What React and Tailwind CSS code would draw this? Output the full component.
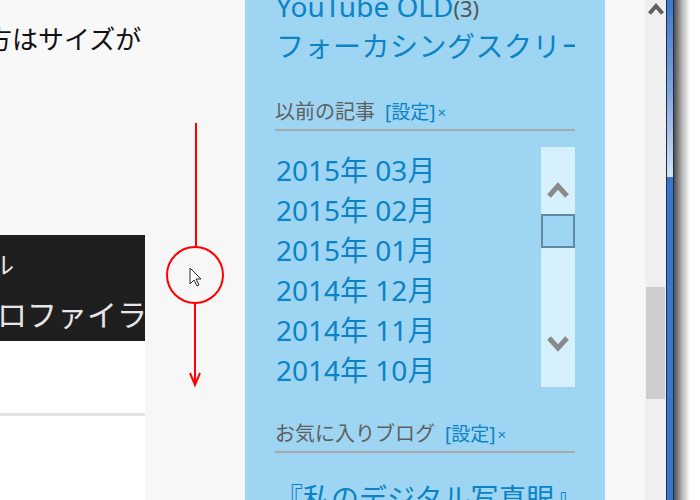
import React from 'react';

const months = ['2015年 03月', '2015年 02月', '2015年 01月', '2014年 12月', '2014年 11月', '2014年 10月'];

function Chevron({ down, className, color, width }) {
  return (
    <svg viewBox="0 0 22 18" className={className}>
      <polyline
        points={down ? '2,3 11,13 20,3' : '2,15 11,5 20,15'}
        fill="none"
        stroke={color}
        strokeWidth={width}
        strokeLinejoin="miter"
      />
    </svg>
  );
}

function WidgetHeading({ title }) {
  return (
    <div className="h-[36px] flex items-center border-b-2 border-[#a9a9a9] whitespace-nowrap">
      <span className="text-[20px] text-[#5f5f5f]">{title}</span>
      <span className="ml-[10px] text-[19px] text-[#0b83c6]">[設定]</span>
      <span className="ml-[2px] text-[15px] text-[#0b83c6]">×</span>
    </div>
  );
}

export default function App() {
  return (
    <div className="w-[700px] h-[500px] overflow-hidden flex bg-white font-['Noto_Sans','Noto_Sans_CJK_JP',sans-serif]">
      {/* left article column */}
      <div className="w-[145px] shrink-0 flex flex-col overflow-hidden">
        <div className="h-[235px] bg-[#f8f8f8] pt-[20px]">
          <p className="ml-[-14px] whitespace-nowrap text-[26px] leading-[36px] text-[#111] font-['Noto_Sans_CJK_JP',sans-serif]">
            方はサイズが
          </p>
        </div>
        <div className="h-[106px] bg-[#1f1f1f] pt-[11px] text-[#e6e6e6] font-['Noto_Sans_CJK_JP',sans-serif] whitespace-nowrap">
          <p className="ml-[-10px] text-[24px] leading-[36px]">ル</p>
          <p className="mt-[11px] ml-[-3px] text-[30px] leading-[40px]">ロファイラ</p>
        </div>
        <div className="flex-1 bg-white">
          <div className="mt-[72px] h-[3px] bg-[#e4e4e4]" />
        </div>
      </div>

      {/* gap column with annotation */}
      <div className="w-[100px] shrink-0 bg-[#f7f7f7]">
        <svg width="100" height="270" viewBox="0 0 100 270" className="mt-[120px] block">
          <line x1="51" y1="3" x2="51" y2="127" stroke="#ff0000" strokeWidth="2" />
          <circle cx="50" cy="155" r="28" fill="none" stroke="#ff0000" strokeWidth="2" />
          <line x1="50" y1="183" x2="50" y2="265" stroke="#ff0000" strokeWidth="2" />
          <polyline points="45,253 50,265 55,253" fill="none" stroke="#ff0000" strokeWidth="2" />
          <polygon
            points="45,148 45,164 49,160 52,166 54,165 51,159 56,159"
            fill="#fff"
            stroke="#2a2a35"
            strokeWidth="1"
          />
        </svg>
      </div>

      {/* sidebar */}
      <div className="w-[360px] shrink-0 bg-[#9dd5f2] pl-[30px] overflow-hidden">
        <div className="w-[300px] flex flex-col">
          <div className="mt-[-14px] h-[40px] leading-[40px] whitespace-nowrap overflow-hidden pl-[1px]">
            <span className="text-[28px] text-[#0b83c6]">YouTube OLD</span>
            <span className="text-[22px] text-[#555]">(3)</span>
          </div>
          <div className="h-[40px] leading-[40px] whitespace-nowrap overflow-hidden pl-[1px] text-[28px] tracking-[0.5px] text-[#0b83c6]">
            フォーカシングスクリーン
          </div>

          <div className="mt-[29px]">
            <WidgetHeading title="以前の記事" />
          </div>

          <div className="mt-[16px] h-[240px] flex">
            <ul className="flex-1 pl-[1px] pt-[3px]">
              {months.map((m) => (
                <li key={m} className="h-[40px] leading-[40px] text-[28px] text-[#0b83c6] whitespace-nowrap">
                  {m}
                </li>
              ))}
            </ul>
            <div className="w-[34px] bg-[#d6f0fd] flex flex-col items-center pt-[34px]">
              <Chevron className="w-[22px] h-[18px]" color="#8a8a8a" width="5" />
              <div className="mt-[15px] w-[34px] h-[34px] border-2 border-[#5f8aa0] bg-[#9dd5f2]" />
              <Chevron down className="mt-[87px] w-[22px] h-[18px]" color="#8a8a8a" width="5" />
            </div>
          </div>

          <div className="mt-[30px]">
            <WidgetHeading title="お気に入りブログ" />
          </div>

          <div className="mt-[25px] h-[40px] leading-[40px] whitespace-nowrap text-[28px] text-[#0b83c6]">
            『私のデジタル写真眼』
          </div>
        </div>
      </div>

      {/* right margin */}
      <div className="w-[40px] shrink-0 bg-[#f7f7f7]" />

      {/* page scrollbar */}
      <div className="w-[21px] shrink-0 bg-[#efefef] flex flex-col items-center">
        <svg viewBox="0 0 16 13" className="mt-[2px] w-[16px] h-[13px]">
          <polyline points="1.5,11.5 8,4 14.5,11.5" fill="none" stroke="#606060" strokeWidth="4" />
        </svg>
        <div className="mt-[272px] w-[19px] h-[112px] bg-[#cdcdcd]" />
      </div>

      {/* window frame */}
      <div className="w-[1px] shrink-0 bg-[#1d2d4a]" />
      <div className="w-[6px] shrink-0 flex flex-col">
        <div className="h-[177px] bg-gradient-to-b from-[#3d77c9] via-[#7ea3dc] to-[#d6e4f6]" />
        <div className="flex-1 bg-[#3a76cb]" />
      </div>
      <div className="w-[1px] shrink-0 bg-[#1d2d4a]" />
      <div className="w-[16px] shrink-0 bg-gradient-to-r from-[#4e4e4e] via-[#b5b5b5] to-white" />
      <div className="flex-1 bg-white" />
    </div>
  );
}
